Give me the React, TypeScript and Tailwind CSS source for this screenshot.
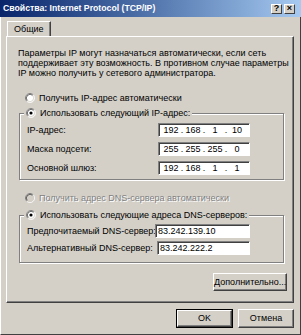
import React from "react";

const font = { fontFamily: '"Liberation Sans", Arial, sans-serif' };

const Radio = ({ checked, disabled }: { checked?: boolean; disabled?: boolean }) => (
  <svg width="10" height="10" viewBox="0 0 12 12" className="shrink-0">
    <circle cx="6" cy="6" r="5" fill={disabled ? "#d4d0c8" : "#ffffff"} />
    <path d="M2.11 9.89 A5.5 5.5 0 0 1 9.89 2.11" fill="none" stroke="#808080" />
    <path d="M9.89 2.11 A5.5 5.5 0 0 1 2.11 9.89" fill="none" stroke="#ffffff" />
    <path d="M2.82 9.18 A4.5 4.5 0 0 1 9.18 2.82" fill="none" stroke="#404040" />
    <path d="M9.18 2.82 A4.5 4.5 0 0 1 2.82 9.18" fill="none" stroke="#d4d0c8" />
    {checked && <circle cx="6" cy="6" r="1.9" fill="#000000" />}
  </svg>
);

const Field = ({ children, className }: { children: React.ReactNode; className?: string }) => (
  <div
    className={[
      "h-[14px] bg-white border border-t-[#808080] border-l-[#808080] border-r-white border-b-white shadow-[inset_1px_1px_0_#404040] flex items-center text-[9px] leading-none text-black whitespace-nowrap",
      className,
    ].join(" ")}
  >
    {children}
  </div>
);

const IpField = ({ parts }: { parts: string[] }) => (
  <Field className="w-[92px] pl-[3px]">
    {parts.map((p, i) => (
      <React.Fragment key={i}>
        <span className="w-[18px] text-center">{p}</span>
        {i < 3 && <span className="w-[4px] text-center">.</span>}
      </React.Fragment>
    ))}
  </Field>
);

const Button = ({ label, def, className }: { label: string; def?: boolean; className?: string }) => (
  <div className={[def ? "border border-black" : "", "flex", className].join(" ")}>
    <div className="flex-1 flex items-center justify-center bg-[#d4d0c8] border border-t-white border-l-white border-r-[#404040] border-b-[#404040] shadow-[inset_-1px_-1px_0_#808080] text-[9px] text-black leading-none whitespace-nowrap">
      {label}
    </div>
  </div>
);

const TitleButton = ({ children }: { children: React.ReactNode }) => (
  <div className="w-[11px] h-[10px] bg-[#d4d0c8] border border-t-white border-l-white border-r-[#404040] border-b-[#404040] flex items-center justify-center text-[9px] font-bold leading-none text-black">
    {children}
  </div>
);

const Group = ({ legend, children, className }: { legend: React.ReactNode; children: React.ReactNode; className?: string }) => (
  <div
    className={[
      "relative ml-[1px] w-[265px] border border-[#808080] shadow-[inset_1px_1px_0_#fff,1px_1px_0_#fff]",
      className,
    ].join(" ")}
  >
    <div className="absolute left-[4px] top-[-6px] h-[10px] flex items-center gap-[4px] px-[2px] bg-[#d4d0c8]">
      {legend}
    </div>
    {children}
  </div>
);

export default function App() {
  return (
    <div className="w-[301px] h-[335px] bg-[#d4d0c8] flex flex-col text-black select-none" style={font}>
      <div className="h-[17px] shrink-0 flex items-center pl-[3px] pr-[6px] bg-gradient-to-r from-[#0a246a] to-[#a6caf0]">
        <span className="text-white font-bold text-[8.7px] leading-none whitespace-nowrap">
          Свойства: Internet Protocol (TCP/IP)
        </span>
        <div className="ml-auto flex gap-[2px]">
          <TitleButton>?</TitleButton>
          <TitleButton>×</TitleButton>
        </div>
      </div>

      <div className="flex-1 flex flex-col pl-[5px] pr-[6px] border-l border-l-white border-r border-r-[#404040] border-b border-b-[#404040]">
        <div className="mt-[4px] flex">
          <div className="ml-[1px] h-[15px] px-[6px] flex items-center border border-b-0 border-t-white border-l-white border-r-[#404040] shadow-[inset_-1px_0_0_#808080] text-[9px] leading-none">
            Общие
          </div>
        </div>

        <div className="h-[267px] border border-t-white border-l-white border-r-[#404040] border-b-[#404040] shadow-[inset_-1px_-1px_0_#808080] pl-[11px] pt-[11px] flex flex-col text-[9px]">
          <p className="leading-[10px] whitespace-nowrap">
            Параметры IP могут назначаться автоматически, если сеть
            <br />
            поддерживает эту возможность. В противном случае параметры
            <br />
            IP можно получить у сетевого администратора.
          </p>

          <div className="mt-[15px] ml-[7px] h-[10px] flex items-center gap-[4px] leading-none whitespace-nowrap">
            <Radio />
            <span>Получить IP-адрес автоматически</span>
          </div>

          <Group
            className="mt-[10px] pt-[9px] pb-[4px] pl-[7px]"
            legend={
              <>
                <Radio checked />
                <span className="leading-none whitespace-nowrap">Использовать следующий IP-адрес:</span>
              </>
            }
          >
            <div className="flex flex-col gap-[5px]">
              <div className="flex items-center">
                <span className="w-[131px] leading-none whitespace-nowrap">IP-адрес:</span>
                <IpField parts={["192", "168", "1", "10"]} />
              </div>
              <div className="flex items-center">
                <span className="w-[131px] leading-none whitespace-nowrap">Маска подсети:</span>
                <IpField parts={["255", "255", "255", "0"]} />
              </div>
              <div className="flex items-center">
                <span className="w-[131px] leading-none whitespace-nowrap">Основной шлюз:</span>
                <IpField parts={["192", "168", "1", "1"]} />
              </div>
            </div>
          </Group>

          <div className="mt-[13px] ml-[7px] h-[10px] flex items-center gap-[4px] leading-none whitespace-nowrap">
            <Radio disabled />
            <span className="text-[#808080] [text-shadow:1px_1px_0_#ffffff]">
              Получить адрес DNS-сервера автоматически
            </span>
          </div>

          <Group
            className="mt-[12px] pt-[8px] pb-[7px] pl-[7px]"
            legend={
              <>
                <Radio checked />
                <span className="leading-none whitespace-nowrap">Использовать следующие адреса DNS-серверов:</span>
              </>
            }
          >
            <div className="flex flex-col gap-[3px]">
              <div className="flex items-center">
                <span className="w-[128px] leading-none whitespace-nowrap">Предпочитаемый DNS-сервер:</span>
                <Field className="w-[95px] pl-[2px]">83.242.139.10</Field>
              </div>
              <div className="flex items-center">
                <span className="w-[130px] leading-none whitespace-nowrap">Альтернативный DNS-сервер:</span>
                <Field className="w-[93px] pl-[2px] border-l-[#404040]">83.242.222.2</Field>
              </div>
            </div>
          </Group>

          <div className="w-[266px] mt-[10px] flex justify-end pr-[1px]">
            <Button label="Дополнительно..." className="w-[70px] h-[18px]" />
          </div>
        </div>

        <div className="mt-[6px] flex justify-end gap-[5px]">
          <Button label="OK" def className="w-[57px] h-[19px]" />
          <Button label="Отмена" className="w-[56px] h-[19px]" />
        </div>
      </div>
    </div>
  );
}
